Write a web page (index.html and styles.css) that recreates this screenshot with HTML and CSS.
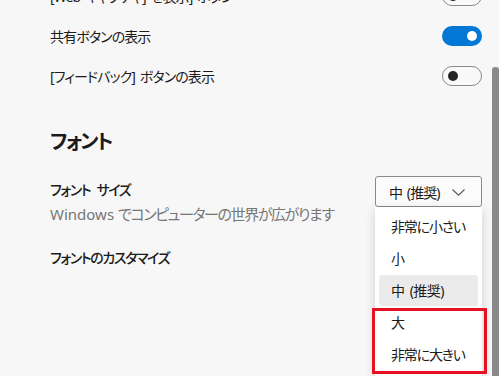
FILE: index.html
```html
<!DOCTYPE html>
<html lang="ja">
<head>
    <meta charset="UTF-8">
    <title>設定 | 外観</title>
    <link rel="stylesheet" href="styles.css">
</head>
<body>
    <div class="page">
        <div class="main">
            <div class="toggles">
                <div class="toggle-row">
                    <span>[Web キャプチャ] を表示] ボタン</span>
                    <span class="switch off"><span class="knob"></span></span>
                </div>
                <div class="toggle-row">
                    <span>共有ボタンの表示</span>
                    <span class="switch on"><span class="knob"></span></span>
                </div>
                <div class="toggle-row">
                    <span>[フィードバック] ボタンの表示</span>
                    <span class="switch off"><span class="knob"></span></span>
                </div>
            </div>

            <h2 class="section-title">フォント</h2>

            <div class="setting-row">
                <div class="setting-text">
                    <div class="setting-label">フォント サイズ</div>
                    <div class="setting-desc">Windows <span class="jp">でコンピューターの世界が広がります</span></div>
                </div>
                <div class="dropdown">
                    <div class="dropdown-btn">
                        <span>中 (推奨)</span>
                        <svg class="chevron" width="13" height="7" viewBox="0 0 13 7">
                            <path d="M0.5 0.5 L6.5 6.2 L12.5 0.5" fill="none" stroke="#555" stroke-width="1.1"/>
                        </svg>
                    </div>
                    <div class="dropdown-menu">
                        <div class="menu-item">非常に小さい</div>
                        <div class="menu-item">小</div>
                        <div class="menu-item selected">中 (推奨)</div>
                        <div class="menu-item">大</div>
                        <div class="menu-item">非常に大きい</div>
                        <div class="highlight-box"></div>
                    </div>
                </div>
            </div>

            <div class="setting-label customize">フォントのカスタマイズ</div>
        </div>
        <div class="scrollbar">
            <div class="thumb"></div>
        </div>
    </div>
</body>
</html>
```

FILE: styles.css
```css
html, body {
    margin: 0;
    padding: 0;
    height: 100%;
    overflow: hidden;
}

body {
    background-color: #f7f7f7;
    color: #1b1b1b;
    font-family: "Noto Sans", "Noto Sans CJK JP", sans-serif;
    font-feature-settings: "palt";
    font-size: 14px;
    letter-spacing: -0.9px;
    word-spacing: 2px;
}

.page {
    display: flex;
    height: 376px;
}

.main {
    width: 432px;
    padding: 0 10px 0 50px;
}

.toggles {
    margin-top: -24px;
}

.toggle-row {
    height: 40px;
    display: flex;
    justify-content: space-between;
    align-items: center;
    white-space: nowrap;
}

.switch {
    position: relative;
    width: 40px;
    height: 20px;
    border-radius: 10px;
    box-sizing: border-box;
    display: flex;
    align-items: center;
    flex-shrink: 0;
}

.switch.on {
    background-color: #0078d4;
    justify-content: flex-end;
    padding-right: 5px;
}

.switch.off {
    border: 1px solid #8a8a8a;
    background-color: #f9f9f9;
    padding-left: 5px;
}

.knob {
    width: 10px;
    height: 10px;
    border-radius: 50%;
}

.switch.on .knob {
    background-color: #ffffff;
}

.switch.off .knob {
    background-color: #242424;
}

.section-title {
    font-size: 20px;
    font-weight: 600;
    line-height: 28px;
    letter-spacing: -2px;
    margin: 32px 0 20px;
}

.setting-row {
    display: flex;
    justify-content: space-between;
    align-items: flex-start;
}

.setting-label {
    font-weight: 500;
    line-height: 20px;
    margin-top: 4px;
    letter-spacing: -1.4px;
    word-spacing: 4px;
}

.setting-desc {
    color: #767676;
    font-size: 15px;
    line-height: 22px;
    margin-top: 3px;
    letter-spacing: 0;
    word-spacing: 0;
    white-space: nowrap;
}

.setting-desc .jp {
    letter-spacing: -1.4px;
}

.customize {
    margin-top: 23px;
}

.dropdown {
    position: relative;
    width: 107px;
}

.dropdown-btn {
    height: 31px;
    box-sizing: border-box;
    border: 1px solid #8a8a8a;
    border-radius: 3px;
    background-color: #fbfbfb;
    display: flex;
    align-items: center;
    justify-content: space-between;
    padding: 0 16px 0 13px;
    white-space: nowrap;
}

.chevron {
    margin-top: 1px;
}

.dropdown-menu {
    position: absolute;
    top: 31px;
    left: 0;
    width: 107px;
    padding-top: 4px;
    background-color: #ffffff;
    box-shadow: 0 3px 10px rgba(0, 0, 0, 0.16);
    height: 200px;
}

.menu-item {
    height: 32px;
    line-height: 32px;
    margin: 0 4px;
    padding: 0 12px;
    border-radius: 3px;
    white-space: nowrap;
    letter-spacing: -1.2px;
}

.menu-item.selected {
    background-color: #ebebeb;
    height: 31px;
    line-height: 31px;
    margin-bottom: 1px;
    letter-spacing: -0.5px;
}

.highlight-box {
    position: absolute;
    top: 101px;
    left: -3px;
    width: 115px;
    height: 66px;
    box-sizing: border-box;
    border: 3px solid #e81123;
}

.scrollbar {
    width: 7px;
    margin-left: auto;
}

.thumb {
    margin-top: 67px;
    height: 320px;
    background-color: #8a8a8a;
    border-radius: 3px 3px 0 0;
}
```
